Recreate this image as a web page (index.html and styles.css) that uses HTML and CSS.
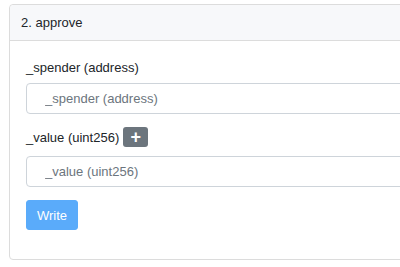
FILE: index.html
```html
<!DOCTYPE html>
<html lang="en">
<head>
    <meta charset="UTF-8">
    <meta name="viewport" content="width=device-width, initial-scale=1.0">
    <title>approve</title>
    <link rel="stylesheet" href="styles.css">
</head>
<body>
    <div class="card">
        <div class="card-header">2. approve</div>
        <div class="card-body">
            <form class="method-form">
                <div class="form-group">
                    <label for="spender">_spender (address)</label>
                    <input type="text" id="spender" placeholder="_spender (address)">
                </div>

                <div class="form-group">
                    <div class="label-row">
                        <label for="value">_value (uint256)</label>
                        <button type="button" class="btn-add">+</button>
                    </div>
                    <input type="text" id="value" placeholder="_value (uint256)">
                </div>

                <button type="submit" class="btn-write" disabled>Write</button>
            </form>
        </div>
    </div>
</body>
</html>
```

FILE: styles.css
```css
/* Global styles */
* {
    margin: 0;
    padding: 0;
    box-sizing: border-box;
}

html {
    overflow: hidden;
}

body {
    font-family: 'Liberation Sans', Arial, sans-serif;
    font-size: 13px;
    line-height: 21px;
    color: #212529;
    background-color: #fff;
    padding: 4px 0 0 9px;
}

/* Card */
.card {
    width: 440px;
    border: 1px solid #dcdcdc;
    border-radius: 4px;
    background-color: #fff;
}

.card-header {
    height: 36px;
    padding: 7px 11px;
    background-color: #f7f8fa;
    border-bottom: 1px solid #dcdcdc;
    border-radius: 4px 4px 0 0;
}

.card-body {
    padding: 16px 16px 29px;
}

/* Form */
.form-group {
    margin-bottom: 8px;
}

.form-group label {
    display: block;
    margin-bottom: 5px;
}

.label-row {
    display: flex;
    align-items: center;
    gap: 4px;
    height: 22px;
    margin-top: 12px;
    margin-bottom: 8px;
}

.label-row label {
    margin-bottom: 0;
}

.form-group input {
    display: block;
    width: 100%;
    height: 31px;
    padding: 0 18px;
    font-family: inherit;
    font-size: 13px;
    color: #495057;
    border: 1px solid #ced4da;
    border-radius: 4px;
}

.form-group input::placeholder {
    color: #6c757d;
}

.btn-add {
    width: 25px;
    height: 20px;
    font-family: inherit;
    font-size: 18px;
    font-weight: bold;
    line-height: 18px;
    color: #fff;
    background-color: #6c757d;
    border: none;
    border-radius: 3px;
}

.btn-write {
    margin-top: 5px;
    height: 30px;
    padding: 0 10px;
    font-family: inherit;
    font-size: 13px;
    color: #fff;
    background-color: #5aabfa;
    border: 1px solid #5aabfa;
    border-radius: 3px;
}
```
